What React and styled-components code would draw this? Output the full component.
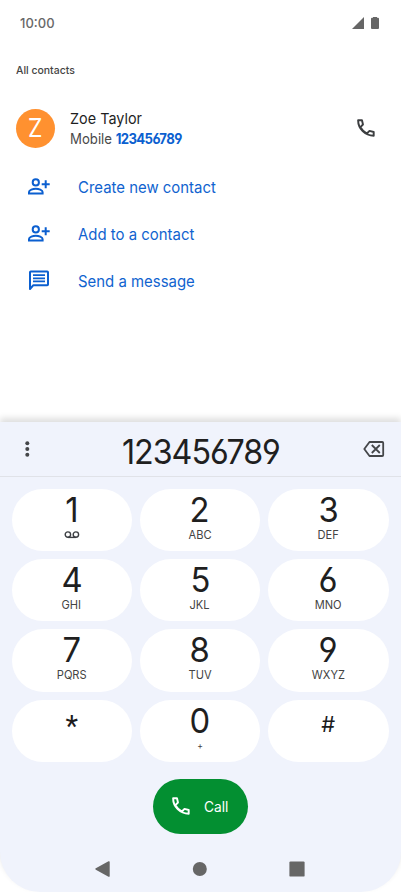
import React from 'react';
import styled, { createGlobalStyle } from 'styled-components';

const Global = createGlobalStyle`
  * { box-sizing: border-box; }
  body {
    margin: 0;
    background: #fff;
    font-family: Inter, Roboto, sans-serif;
    font-feature-settings: "cv03", "cv04";
    color: #1f1f1f;
  }
  button { font: inherit; font-feature-settings: inherit; color: inherit; border: 0; padding: 0; background: none; }
  svg { display: block; flex: none; }
`;

const Phone = styled.div`
  width: 401px;
  height: 892px;
  display: flex;
  flex-direction: column;
  overflow: hidden;
  background: #fff;
`;

/* Text narrowed horizontally by a factor while keeping its height */
const Text = styled.span`
  display: inline-block;
  white-space: nowrap;
  font-size: ${p => p.$size}px;
  line-height: ${p => p.$line || p.$size * 1.25}px;
  font-weight: ${p => p.$weight || 400};
  letter-spacing: ${p => p.$spacing || 0}px;
  color: ${p => p.$color || '#1f1f1f'};
  transform: scaleX(${p => p.$narrow || 1});
  transform-origin: ${p => (p.$center ? 'center' : 'left')};
`;

const StatusBar = styled.header`
  height: 46px;
  padding: 1px 22px 0 20px;
  display: flex;
  align-items: center;
  justify-content: space-between;
`;

const StatusIcons = styled.div`
  display: flex;
  gap: 7px;
  padding-bottom: 2px;
`;

const Results = styled.main`
  flex: 1;
  padding-top: 17px;
`;

const SectionTitle = styled.div`
  height: 16px;
  padding-left: 15.5px;
  display: flex;
  align-items: center;
`;

const Contact = styled.div`
  height: 60px;
  margin: 19px 0 5px;
  padding: 0 24px 0 15.5px;
  display: flex;
  align-items: center;
`;

const Avatar = styled.div`
  width: 39px;
  height: 39px;
  border-radius: 50%;
  background: #ff9130;
  display: flex;
  align-items: center;
  justify-content: center;
`;

const ContactInfo = styled.div`
  flex: 1;
  padding: 2px 0 0 15.5px;
  display: flex;
  flex-direction: column;
`;

const Match = styled.b`
  font-weight: 700;
  color: #0b5fd0;
  letter-spacing: -0.7px;
`;

const Action = styled.button`
  width: 100%;
  height: 47px;
  padding-left: 27px;
  display: flex;
  align-items: center;
  gap: 27px;
`;

const Panel = styled.section`
  height: 470px;
  border-radius: 0 0 40px 40px;
  background: #f0f3fc;
  box-shadow: 0 -4px 6px rgba(0, 0, 0, 0.13);
  display: flex;
  flex-direction: column;
`;

const NumberBar = styled.div`
  height: 55px;
  border-bottom: 1px solid #e0e2e8;
  padding: 0 15px 0 17px;
  display: flex;
  align-items: center;
  justify-content: space-between;
`;

const NumberField = styled.div`
  padding: 6px 0 0 2px;
`;

const Keys = styled.div`
  padding: 12px 12.5px 0 11.5px;
  display: grid;
  grid-template-columns: repeat(3, 120.5px);
  justify-content: space-between;
  row-gap: 8px;
`;

const Key = styled.button`
  height: 62.2px;
  border-radius: 32px;
  background: #fff;
  display: flex;
  flex-direction: column;
  align-items: center;
  padding-top: 2px;
`;

const KeyHint = styled.div`
  height: 14px;
  display: flex;
  align-items: center;
`;

const KeySymbol = styled.span`
  font-family: ${p => p.$family};
  font-size: ${p => p.$size}px;
  line-height: ${p => p.$line}px;
  font-weight: ${p => p.$weight};
  color: #1b1b1c;
`;

const CallRow = styled.div`
  padding-top: 17px;
  display: flex;
  justify-content: center;
`;

const CallButton = styled.button`
  width: 95px;
  height: 55px;
  border-radius: 28px;
  background: #038f31;
  padding-left: 17px;
  display: flex;
  align-items: center;
  gap: 12px;
`;

const NavBar = styled.nav`
  padding: 27px 96.5px 0 95px;
  display: flex;
  align-items: center;
  justify-content: space-between;
`;

const PhoneIcon = ({ color, size = 22 }) => (
  <svg width={size} height={size} viewBox="0 0 24 24" fill="none" stroke={color} strokeWidth="2.1" strokeLinejoin="round">
    <path d="M3.4 3.6h4.2l1.1 4.6-2.8 2.8c1.6 3 4.2 5.4 7.1 7l2.8-2.8 4.6 1.1v4.1C11 20.4 3.4 12.8 3.4 3.6z" />
  </svg>
);

const PersonAddIcon = () => (
  <svg width="24" height="24" viewBox="0 0 24 24" fill="none" stroke="#0b5fd0" strokeWidth="2">
    <circle cx="8.8" cy="7.4" r="3.1" />
    <path d="M2 18.5v-1.4c0-2.2 4-3.4 6.8-3.4s6.800 1.2 6.800 3.400V18.5zM18.700 5.200v8M14.700 9.200h8" />
  </svg>
);

const ChatIcon = () => (
  <svg width="24" height="24" viewBox="0 0 24 24" fill="none" stroke="#0b5fd0" strokeWidth="2">
    <path d="M3 20V3.2q0-.8.8-.8h16.4q.8 0 .8.8v12.2q0 .8-.8.8H6.4z" strokeLinejoin="round" />
    <path d="M6 6.2h12M6 9.3h12M6 12.4h12" strokeWidth="1.8" />
  </svg>
);

const BackspaceIcon = () => (
  <svg width="24" height="24" viewBox="0 0 24 24" fill="none" stroke="#444649" strokeWidth="1.8">
    <path d="M7.5 5H20.2q1 0 1 1v12q0 1-1 1H7.5L2.3 12z" strokeLinejoin="round" />
    <path d="M9.8 8l8 8M17.8 8l-8 8" />
  </svg>
);

const MoreIcon = () => (
  <svg width="20" height="20" viewBox="0 0 20 20" fill="#444649">
    <circle cx="10.3" cy="4.3" r="2" />
    <circle cx="10.3" cy="10" r="2" />
    <circle cx="10.3" cy="15.8" r="2" />
  </svg>
);

const VoicemailIcon = () => (
  <svg width="16" height="9" viewBox="0 0 16 9" fill="none" stroke="#3c3f43" strokeWidth="1.4">
    <circle cx="3.9" cy="3.6" r="2.7" />
    <circle cx="11.9" cy="3.6" r="2.7" />
    <path d="M3.9 6.4h8" />
  </svg>
);

const keys = [
  ['1', <VoicemailIcon />], ['2', 'ABC'], ['3', 'DEF'],
  ['4', 'GHI'], ['5', 'JKL'], ['6', 'MNO'],
  ['7', 'PQRS'], ['8', 'TUV'], ['9', 'WXYZ'],
  ['*'], ['0', '+'], ['#'],
];

const symbolStyles = {
  '*': { $family: 'Roboto, sans-serif', $size: 29, $line: 48, $weight: 400 },
  '#': { $family: 'Inter, sans-serif', $size: 22, $line: 45, $weight: 400 },
};

const actions = [
  ['Create new contact', <PersonAddIcon />],
  ['Add to a contact', <PersonAddIcon />],
  ['Send a message', <ChatIcon />],
];

export default function App() {
  return (
    <Phone>
      <Global />
      <StatusBar>
        <Text $size={13.7} $weight={500} $color="#686868" $narrow={0.95}>10:00</Text>
        <StatusIcons>
          <svg width="12" height="12" viewBox="0 0 12 12" fill="#666"><path d="M12 0v12H0z" /></svg>
          <svg width="8" height="12" viewBox="0 0 8 12" fill="#666"><path d="M2 0h4v.8h1q1 0 1 1v9.2q0 1-1 1H1q-1 0-1-1V1.8q0-1 1-1h1z" /></svg>
        </StatusIcons>
      </StatusBar>

      <Results>
        <SectionTitle>
          <Text $size={11} $weight={500} $color="#444" $narrow={0.95}>All contacts</Text>
        </SectionTitle>
        <Contact>
          <Avatar><Text $size={26} $color="#fff" $narrow={0.88} $center>Z</Text></Avatar>
          <ContactInfo>
            <Text $size={15} $line={20} $narrow={0.96}>Zoe Taylor</Text>
            <Text $size={14.5} $line={20} $color="#4a4a4a" $narrow={0.91}>Mobile <Match>123456789</Match></Text>
          </ContactInfo>
          <PhoneIcon color="#3c3e40" />
        </Contact>
        {actions.map(([label, icon]) => (
          <Action key={label}>
            {icon}
            <Text $size={16} $color="#1063cf" $narrow={0.933}>{label}</Text>
          </Action>
        ))}
      </Results>

      <Panel>
        <NumberBar>
          <MoreIcon />
          <NumberField>
            <Text $size={34.3} $narrow={0.94} $spacing={-1.1} $center>123456789</Text>
          </NumberField>
          <BackspaceIcon />
        </NumberBar>
        <Keys>
          {keys.map(([label, hint]) => (
            <Key key={label} aria-label={label}>
              {hint
                ? <Text $size={34.5} $line={37} $narrow={0.95} $center>{label}</Text>
                : <KeySymbol {...symbolStyles[label]}>{label}</KeySymbol>}
              {hint && (
                <KeyHint>
                  {typeof hint === 'string'
                    ? <Text $size={hint === '+' ? 9 : 11.7} $color="#444" $narrow={0.95} $center>{hint}</Text>
                    : hint}
                </KeyHint>
              )}
            </Key>
          ))}
        </Keys>
        <CallRow>
          <CallButton>
            <PhoneIcon color="#fff" />
            <Text $size={14} $color="#fff" $narrow={0.98}>Call</Text>
          </CallButton>
        </CallRow>
        <NavBar>
          <svg width="15" height="16" viewBox="0 0 15 16" fill="#666"><path d="M.8 7.3L13.5.3q1.2-.4 1.2.8v13.8q0 1.2-1.2.8L.8 8.700q-1-.7 0-1.4z" /></svg>
          <svg width="15" height="14" viewBox="-.8 0 15 14" fill="#666"><circle cx="7" cy="7" r="7" /></svg>
          <svg width="16" height="16" viewBox="0 0 16 16" fill="#666"><rect x=".4" y=".4" width="15.2" height="15.2" rx="1.2" /></svg>
        </NavBar>
      </Panel>
    </Phone>
  );
}
